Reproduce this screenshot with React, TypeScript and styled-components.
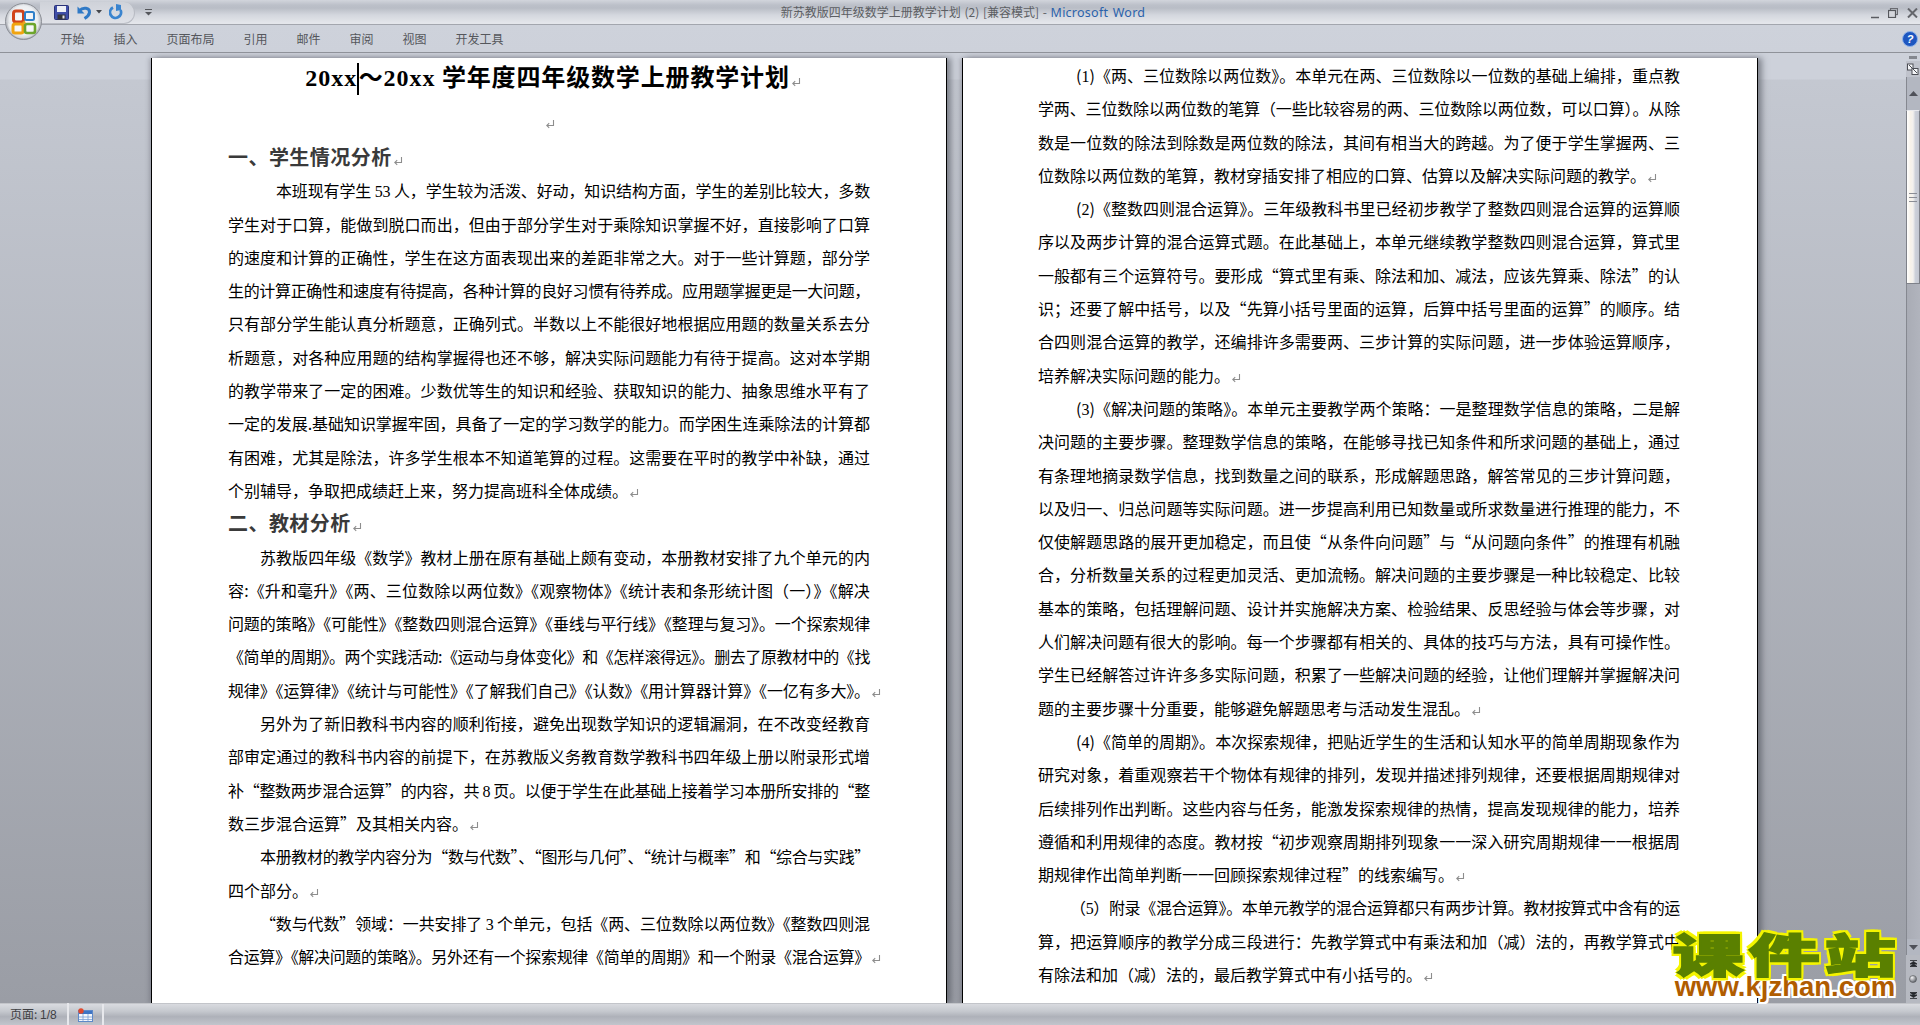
import React, { useLayoutEffect, useRef } from "react";
import styled, { createGlobalStyle } from "styled-components";

const CJK = `"Noto Sans CJK SC", "Noto Sans", sans-serif`;
const TEXT_W = 642;
const PITCH = 33.3;

const Global = createGlobalStyle`
  html, body { margin: 0; padding: 0; height: 100%; overflow: hidden; background: #c8ccd4; }
  #root { height: 100%; }
`;

const Shell = styled.div`
  position: relative;
  width: 1920px;
  height: 1025px;
  display: flex;
  flex-direction: column;
  overflow: hidden;
  font-family: ${CJK};
`;

/* ---------- title bar ---------- */
const TitleBar = styled.div`
  height: 24px;
  flex: none;
  display: grid;
  grid-template-columns: 1fr auto 1fr;
  align-items: center;
  background: linear-gradient(#d2d5dc 0, #bcc0c9 5px, #b9bdc6 8px, #d4d7de 15px, #e4e6eb 23px);
  border-bottom: 1px solid #a3a6ae;
`;
const Qat = styled.div`
  justify-self: start;
  margin-left: 40px;
  width: 95px;
  height: 22px;
  display: flex;
  align-items: center;
  padding-left: 14px;
  box-sizing: border-box;
  border: 1px solid #b9bcc4;
  border-left: none;
  border-top: none;
  border-radius: 0 12px 12px 0;
  background: linear-gradient(#cfd2d9, #dfe1e7);
`;
const QatSlot = styled.span<{ $w: number }>`
  display: flex;
  align-items: center;
  width: ${(p) => p.$w}px;
  flex: none;
`;
const WindowTitle = styled.div`
  font-size: 12px;
  color: #5c5e63;
  white-space: pre;
  word-spacing: 1px;
  line-height: 24px;
  padding-left: 6px;
`;
const AppName = styled.span`
  color: #2b62ab;
  font-family: "Noto Sans", sans-serif;
  font-size: 12.5px;
  letter-spacing: 0.25px;
`;
const TitleDropdown = styled.span`
  display: flex;
  margin-left: 22px;
`;
const WindowButtons = styled.div`
  justify-self: end;
  display: flex;
  align-items: center;
  gap: 9px;
  margin-right: 2px;
`;

/* ---------- ribbon tabs ---------- */
const Ribbon = styled.div`
  height: 27px;
  flex: none;
  display: flex;
  align-items: center;
  padding-left: 46px;
  background: linear-gradient(#ced2db, #cdd1da);
  border-bottom: 1px solid #8f9299;
`;
const Tab = styled.div`
  padding: 0 14.5px;
  font-size: 12px;
  line-height: 26px;
  color: #55575c;
`;
const HelpSlot = styled.div`
  display: flex;
  margin-left: auto;
  margin-right: 2px;
`;

const Orb = styled.div`
  position: absolute;
  left: 5px;
  top: 3px;
  width: 37px;
  height: 37px;
`;

/* ---------- document area ---------- */
const DocArea = styled.div`
  flex: 1;
  min-height: 0;
  display: flex;
`;
const Workspace = styled.div`
  flex: 1;
  min-width: 0;
  padding: 5px 0 0 151px;
  display: flex;
  gap: 15px;
  overflow: hidden;
  background: linear-gradient(#cdd1da 0, #cdd1da 26px, #c4c8d1 27px, #9a9da5 100%);
`;
const Page = styled.div`
  width: 796px;
  flex: none;
  box-sizing: border-box;
  padding: 1px 0 0 75px;
  background: #fff;
  border-left: 1px solid #000;
  border-right: 1px solid #000;
  box-shadow: 4px 0 6px rgba(70, 72, 82, 0.55), -2px 0 4px rgba(70, 72, 82, 0.25);
  overflow: hidden;
  color: #000;
`;
const FirstPage = styled(Page)`
  padding: 0 0 0 76px;
`;
const DocTitle = styled.div`
  width: ${TEXT_W}px;
  box-sizing: border-box;
  padding-left: 8px;
  height: 38px;
  line-height: 35px;
  text-align: center;
  font-size: 24px;
  font-weight: 700;
  white-space: pre;
  letter-spacing: 0.85px;
`;
const LatinBold = styled.span`
  font-family: "Liberation Serif", serif;
  letter-spacing: 1px;
`;
const Caret = styled.span`
  display: inline-block;
  width: 1.5px;
  height: 32px;
  background: #000;
  vertical-align: middle;
`;
const EmptyPara = styled.div`
  width: ${TEXT_W}px;
  height: 45px;
  line-height: 50px;
  text-align: center;
`;
const Heading = styled.div`
  height: ${PITCH}px;
  line-height: 31px;
  font-size: 20px;
  font-weight: 700;
  color: #3a3a3a;
  letter-spacing: 0.45px;
  white-space: pre;
`;
const Line = styled.div<{ $indent: number }>`
  height: ${PITCH}px;
  line-height: ${PITCH}px;
  font-size: 16px;
  white-space: pre;
  padding-left: ${(p) => p.$indent}px;
`;
const Num = styled.span`
  font-family: "Liberation Serif", serif;
`;
const ParaMark = styled.svg`
  width: 10px;
  height: 10px;
  margin-left: 1px;
  vertical-align: -1px;
`;

/* ---------- scrollbar ---------- */
const Scrollbar = styled.div`
  width: 14px;
  flex: none;
  display: flex;
  flex-direction: column;
  background: linear-gradient(#cdd1da, #9fa3ab);
`;
const SplitBox = styled.div`
  height: 8px;
  flex: none;
  display: flex;
  align-items: center;
  justify-content: center;
`;
const SplitDash = styled.div`
  width: 8px;
  height: 3px;
  background: #84878e;
`;
const RulerBtn = styled.div`
  height: 16px;
  flex: none;
  display: flex;
  align-items: center;
  justify-content: center;
  background: #c0c3cc;
`;
const ArrowBtn = styled.div<{ $h: number }>`
  height: ${(p) => p.$h}px;
  flex: none;
  display: flex;
  align-items: center;
  justify-content: center;
  border-left: 1px solid #858890;
  background: #b3b7c1;
`;
const Thumb = styled.div`
  height: 174px;
  flex: none;
  display: flex;
  align-items: center;
  justify-content: center;
  box-sizing: border-box;
  border: 1px solid #7e8189;
  border-top-color: #e9eaee;
  background: linear-gradient(90deg, #fff 0, #f7f2e9 30%, #f3f1ee 50%, #ccd0d9 70%, #c4c8d2 100%);
`;
const Grip = styled.div`
  width: 8px;
  height: 7px;
  border-top: 1px solid #8a8d95;
  border-bottom: 1px solid #8a8d95;
  background: linear-gradient(transparent 3px, #8a8d95 3px, #8a8d95 4px, transparent 4px);
`;
const Track = styled.div`
  flex: 1;
  border-left: 1px solid #858890;
  background: linear-gradient(90deg, #a9acb5, #b1b4bd);
`;
const BrowseBtn = styled.div`
  height: 16px;
  flex: none;
  display: flex;
  align-items: center;
  justify-content: center;
  background: #b6b9c1;
`;

/* ---------- status bar ---------- */
const StatusBar = styled.div`
  height: 22px;
  flex: none;
  display: flex;
  align-items: center;
  border-top: 1px solid #c3c5ca;
  box-sizing: border-box;
  background: linear-gradient(#d9dbe0 0, #c5c8ce 35%, #aeb1b9 60%, #c2c5cc 100%);
`;
const StatusText = styled.div`
  width: 69px;
  box-sizing: border-box;
  padding-left: 10px;
  font-size: 12px;
  color: #3f4044;
  border-right: 2px solid #e7e8ec;
  line-height: 21px;
  white-space: pre;
`;
const StatusNum = styled.span`
  font-family: "Liberation Sans", sans-serif;
`;
const StatusIcon = styled.div`
  width: 33px;
  display: flex;
  justify-content: center;
  border-right: 2px solid #e7e8ec;
  height: 21px;
  align-items: center;
`;

/* ---------- site watermark ---------- */
const Watermark = styled.div`
  position: absolute;
  left: 1667px;
  top: 927px;
  width: 236px;
  display: flex;
  flex-direction: column;
  align-items: center;
`;
const WmTitle = styled.div`
  font-size: 46px;
  line-height: 50px;
  font-weight: 900;
  color: #5a8000;
  letter-spacing: 3px;
  margin-right: -3px;
  white-space: nowrap;
  transform: scaleX(1.55);
  -webkit-text-stroke: 1.5px #5a8000;
  text-shadow: 2px 0 #f4f400, -2px 0 #f4f400, 0 3px #f4f400, 0 -3px #f4f400, 2px 3px #f4f400, -2px 3px #f4f400,
    2px -3px #f4f400, -2px -3px #f4f400;
`;
const WmUrl = styled.div`
  font-family: "Liberation Sans", sans-serif;
  font-size: 27.5px;
  line-height: 28px;
  font-weight: 700;
  color: #b05c00;
  white-space: nowrap;
  margin-top: -4px;
  text-shadow: 2px 0 #fff, -2px 0 #fff, 0 2px #fff, 0 -2px #fff, 2px 2px #fff, -2px 2px #fff, 2px -2px #fff,
    -2px -2px #fff;
`;

/* ---------- content ---------- */
type LineData = { t: string; i?: number; end?: boolean; fit?: boolean };

const page1Top: LineData[] = [
  { t: "本班现有学生 53 人，学生较为活泼、好动，知识结构方面，学生的差别比较大，多数", i: 48, fit: true },
  { t: "学生对于口算，能做到脱口而出，但由于部分学生对于乘除知识掌握不好，直接影响了口算", fit: true },
  { t: "的速度和计算的正确性，学生在这方面表现出来的差距非常之大。对于一些计算题，部分学", fit: true },
  { t: "生的计算正确性和速度有待提高，各种计算的良好习惯有待养成。应用题掌握更是一大问题，", fit: true },
  { t: "只有部分学生能认真分析题意，正确列式。半数以上不能很好地根据应用题的数量关系去分", fit: true },
  { t: "析题意，对各种应用题的结构掌握得也还不够，解决实际问题能力有待于提高。这对本学期", fit: true },
  { t: "的教学带来了一定的困难。少数优等生的知识和经验、获取知识的能力、抽象思维水平有了", fit: true },
  { t: "一定的发展.基础知识掌握牢固，具备了一定的学习数学的能力。而学困生连乘除法的计算都", fit: true },
  { t: "有困难，尤其是除法，许多学生根本不知道笔算的过程。这需要在平时的教学中补缺，通过", fit: true },
  { t: "个别辅导，争取把成绩赶上来，努力提高班科全体成绩。", end: true },
];
const page1Bottom: LineData[] = [
  { t: "苏教版四年级《数学》教材上册在原有基础上颇有变动，本册教材安排了九个单元的内", i: 32, fit: true },
  { t: "容:《升和毫升》《两、三位数除以两位数》《观察物体》《统计表和条形统计图（一）》《解决", fit: true },
  { t: "问题的策略》《可能性》《整数四则混合运算》《垂线与平行线》《整理与复习》。一个探索规律", fit: true },
  { t: "《简单的周期》。两个实践活动:《运动与身体变化》和《怎样滚得远》。删去了原教材中的《找", fit: true },
  { t: "规律》《运算律》《统计与可能性》《了解我们自己》《认数》《用计算器计算》《一亿有多大》。", fit: true, end: true },
  { t: "另外为了新旧教科书内容的顺利衔接，避免出现数学知识的逻辑漏洞，在不改变经教育", i: 32, fit: true },
  { t: "部审定通过的教科书内容的前提下，在苏教版义务教育数学教科书四年级上册以附录形式增", fit: true },
  { t: "补“整数两步混合运算”的内容，共 8 页。以便于学生在此基础上接着学习本册所安排的“整", fit: true },
  { t: "数三步混合运算”及其相关内容。", end: true },
  { t: "本册教材的教学内容分为“数与代数”、“图形与几何”、“统计与概率”和“综合与实践”", i: 32, fit: true },
  { t: "四个部分。", end: true },
  { t: "“数与代数”领域：一共安排了 3 个单元，包括《两、三位数除以两位数》《整数四则混", i: 32, fit: true },
  { t: "合运算》《解决问题的策略》。另外还有一个探索规律《简单的周期》和一个附录《混合运算》", fit: true, end: true },
];
const page2: LineData[] = [
  { t: "(1)《两、三位数除以两位数》。本单元在两、三位数除以一位数的基础上编排，重点教", i: 38, fit: true },
  { t: "学两、三位数除以两位数的笔算（一些比较容易的两、三位数除以两位数，可以口算）。从除", fit: true },
  { t: "数是一位数的除法到除数是两位数的除法，其间有相当大的跨越。为了便于学生掌握两、三", fit: true },
  { t: "位数除以两位数的笔算，教材穿插安排了相应的口算、估算以及解决实际问题的教学。", end: true },
  { t: "(2)《整数四则混合运算》。三年级教科书里已经初步教学了整数四则混合运算的运算顺", i: 38, fit: true },
  { t: "序以及两步计算的混合运算式题。在此基础上，本单元继续教学整数四则混合运算，算式里", fit: true },
  { t: "一般都有三个运算符号。要形成“算式里有乘、除法和加、减法，应该先算乘、除法”的认", fit: true },
  { t: "识；还要了解中括号，以及“先算小括号里面的运算，后算中括号里面的运算”的顺序。结", fit: true },
  { t: "合四则混合运算的教学，还编排许多需要两、三步计算的实际问题，进一步体验运算顺序，", fit: true },
  { t: "培养解决实际问题的能力。", end: true },
  { t: "(3)《解决问题的策略》。本单元主要教学两个策略：一是整理数学信息的策略，二是解", i: 38, fit: true },
  { t: "决问题的主要步骤。整理数学信息的策略，在能够寻找已知条件和所求问题的基础上，通过", fit: true },
  { t: "有条理地摘录数学信息，找到数量之间的联系，形成解题思路，解答常见的三步计算问题，", fit: true },
  { t: "以及归一、归总问题等实际问题。进一步提高利用已知数量或所求数量进行推理的能力，不", fit: true },
  { t: "仅使解题思路的展开更加稳定，而且使“从条件向问题”与“从问题向条件”的推理有机融", fit: true },
  { t: "合，分析数量关系的过程更加灵活、更加流畅。解决问题的主要步骤是一种比较稳定、比较", fit: true },
  { t: "基本的策略，包括理解问题、设计并实施解决方案、检验结果、反思经验与体会等步骤，对", fit: true },
  { t: "人们解决问题有很大的影响。每一个步骤都有相关的、具体的技巧与方法，具有可操作性。", fit: true },
  { t: "学生已经解答过许许多多实际问题，积累了一些解决问题的经验，让他们理解并掌握解决问", fit: true },
  { t: "题的主要步骤十分重要，能够避免解题思考与活动发生混乱。", end: true },
  { t: "(4)《简单的周期》。本次探索规律，把贴近学生的生活和认知水平的简单周期现象作为", i: 38, fit: true },
  { t: "研究对象，着重观察若干个物体有规律的排列，发现并描述排列规律，还要根据周期规律对", fit: true },
  { t: "后续排列作出判断。这些内容与任务，能激发探索规律的热情，提高发现规律的能力，培养", fit: true },
  { t: "遵循和利用规律的态度。教材按“初步观察周期排列现象一一深入研究周期规律一一根据周", fit: true },
  { t: "期规律作出简单判断一一回顾探索规律过程”的线索编写。", end: true },
  { t: "（5）附录《混合运算》。本单元教学的混合运算都只有两步计算。教材按算式中含有的运", i: 32, fit: true },
  { t: "算，把运算顺序的教学分成三段进行：先教学算式中有乘法和加（减）法的，再教学算式中", fit: true },
  { t: "有除法和加（减）法的，最后教学算式中有小括号的。", end: true },
];

const tabs = ["开始", "插入", "页面布局", "引用", "邮件", "审阅", "视图", "开发工具"];

/* ---------- small drawings ---------- */
const Mark = () => (
  <ParaMark viewBox="0 0 10 10">
    <path d="M8.5 1v5.5H2M4.2 4.2 1.8 6.5l2.4 2.3" fill="none" stroke="#8d8d8d" strokeWidth="1.1" />
  </ParaMark>
);

const OfficeLogo = () => (
  <svg width="37" height="37" viewBox="0 0 37 37">
    <defs>
      <radialGradient id="orbFill" cx="50%" cy="45%" r="55%">
        <stop offset="0" stopColor="#ffffff" />
        <stop offset="0.7" stopColor="#eceef1" />
        <stop offset="1" stopColor="#9ea2aa" />
      </radialGradient>
    </defs>
    <circle cx="18.5" cy="18.5" r="18" fill="url(#orbFill)" stroke="#8d9097" />
    <path d="M3 20a15.500 15.500 0 0 0 31 0c-6 5-25 5-31 0z" fill="#fff" opacity=".45" />
    <rect x="8.500" y="8" width="10" height="11" rx="2.500" fill="none" stroke="#d1431a" strokeWidth="3" />
    <rect x="20" y="9" width="9" height="8" rx="1.500" fill="none" stroke="#2f7fc9" strokeWidth="2" />
    <rect x="8" y="21" width="10" height="9" rx="2" fill="none" stroke="#f0a410" strokeWidth="3" />
    <rect x="20" y="21" width="10" height="9" rx="2" fill="none" stroke="#6da52c" strokeWidth="2.600" />
    <circle cx="19" cy="19.500" r="1.600" fill="#e8a020" />
  </svg>
);
const SaveIcon = () => (
  <svg width="15" height="15" viewBox="0 0 15 15">
    <rect x="0.500" y="0.500" width="14" height="14" rx="1" fill="#3f4ea8" stroke="#2a3278" />
    <rect x="3" y="1" width="9" height="6" fill="#eef0f6" />
    <rect x="3.500" y="9.500" width="8" height="5" fill="#33353c" />
    <rect x="8.500" y="10.500" width="2" height="3" fill="#e4e4e8" />
  </svg>
);
const UndoIcon = () => (
  <svg width="15" height="15" viewBox="0 0 15 15">
    <path d="M2.500 5.500C6 1.800 13 2.500 12.500 7.500 12.200 10 10 12 7.500 13.500" fill="none" stroke="#2f79c6" strokeWidth="3" />
    <path d="M0.500 1.500v7h7z" fill="#2f79c6" />
  </svg>
);
const CaretDown = () => (
  <svg width="6" height="4" viewBox="0 0 6 4">
    <path d="M0 0h6L3 3.500z" fill="#44464c" />
  </svg>
);
const RedoIcon = () => (
  <svg width="14" height="16" viewBox="0 0 14 16">
    <path d="M4 3.500A5.500 5.500 0 1 0 11.500 6" fill="none" stroke="#3a84cf" strokeWidth="2.800" />
    <path d="M7 0v7l5-1V1z" fill="#3a84cf" />
  </svg>
);
const CustomizeIcon = () => (
  <svg width="7" height="7" viewBox="0 0 7 7">
    <path d="M0 0.500h7" stroke="#55575c" />
    <path d="M0 3h7L3.500 6.500z" fill="#55575c" />
  </svg>
);
const MinIcon = () => (
  <svg width="8" height="14" viewBox="0 0 8 14">
    <path d="M0 11.500h8" stroke="#5a5c62" strokeWidth="1.500" />
  </svg>
);
const RestoreIcon = () => (
  <svg width="10" height="10" viewBox="0 0 10 10">
    <rect x="2.500" y="0.500" width="7" height="6" fill="none" stroke="#6a6c72" strokeWidth="1.200" />
    <rect x="0.500" y="2.500" width="7" height="7" fill="#d4d6dc" stroke="#55575c" strokeWidth="1.200" />
  </svg>
);
const CloseIcon = () => (
  <svg width="11" height="10" viewBox="0 0 11 10">
    <path d="M1 0.500 10 9.500M10 0.500 1 9.500" stroke="#64666c" strokeWidth="2" />
  </svg>
);
const HelpIcon = () => (
  <svg width="16" height="16" viewBox="0 0 16 16">
    <circle cx="8" cy="8" r="7.500" fill="#1e56c0" stroke="#8fb2e8" />
    <text x="8" y="12" textAnchor="middle" fontFamily="Liberation Sans, sans-serif" fontWeight="700" fontStyle="italic" fontSize="11" fill="#fff">?</text>
  </svg>
);
const RulerIcon = () => (
  <svg width="12" height="12" viewBox="0 0 12 12">
    <rect x="0.500" y="1" width="5.500" height="6" fill="#f4f5f8" stroke="#4c4e55" />
    <rect x="5" y="5.500" width="6" height="6" fill="#f4f5f8" stroke="#4c4e55" />
    <path d="M2 2l8 8" stroke="#4c4e55" />
  </svg>
);
const Triangle = ({ up }: { up: boolean }) => (
  <svg width="9" height="5" viewBox="0 0 9 5">
    <path d={up ? "M0 5 4.500 0 9 5z" : "M0 0h9L4.500 5z"} fill="#4f5159" />
  </svg>
);
const DoubleArrow = ({ up }: { up: boolean }) => (
  <svg width="7" height="7" viewBox="0 0 7 7">
    <path d={up ? "M0 0.500h7M3.500 1.500 0 4h7zM3.500 4 0 6.500h7z" : "M0 6.500h7M3.500 5.500 0 3h7zM3.500 3 0 0.500h7z"} stroke="#26282d" strokeWidth="0.800" fill="#26282d" />
  </svg>
);
const BrowseDot = () => (
  <svg width="8" height="8" viewBox="0 0 8 8">
    <defs>
      <radialGradient id="dot" cx="35%" cy="30%" r="75%">
        <stop offset="0" stopColor="#f4f5f7" />
        <stop offset="1" stopColor="#5b5e65" />
      </radialGradient>
    </defs>
    <circle cx="4" cy="4" r="3.500" fill="url(#dot)" stroke="#55575c" strokeWidth="0.600" />
  </svg>
);
const MacroIcon = () => (
  <svg width="15" height="14" viewBox="0 0 15 14">
    <rect x="0.500" y="2.500" width="14" height="11" fill="#f4f7fc" stroke="#5e89c8" />
    <rect x="1" y="3" width="13" height="3" fill="#3e74c4" />
    <path d="M1 9h13M1 11.500h13M5 6v7M10 6v7" stroke="#7b9fd3" strokeWidth="0.800" />
    <circle cx="3" cy="3" r="2.700" fill="#e0492e" />
  </svg>
);

/* ---------- text ---------- */
const withNumbers = (text: string) =>
  text.split(/(\d+)/).map((part, k) => (k % 2 ? <Num key={k}>{part}</Num> : part));

const TextLine = ({ t, i = 0, end, fit }: LineData) => {
  const ref = useRef<HTMLSpanElement>(null);
  useLayoutEffect(() => {
    const el = ref.current;
    if (!el || !fit) return;
    el.style.letterSpacing = "0px";
    const natural = el.getBoundingClientRect().width;
    el.style.letterSpacing = `${(TEXT_W - i - natural) / t.length}px`;
  }, [t, i, fit]);
  return (
    <Line $indent={i}>
      <span ref={ref}>{withNumbers(t)}</span>
      {end && <Mark />}
    </Line>
  );
};

export default function App() {
  return (
    <Shell lang="zh-CN">
      <Global />
      <TitleBar>
        <Qat>
          <QatSlot $w={23}><SaveIcon /></QatSlot>
          <QatSlot $w={19}><UndoIcon /></QatSlot>
          <QatSlot $w={13}><CaretDown /></QatSlot>
          <QatSlot $w={14}><RedoIcon /></QatSlot>
          <TitleDropdown><CustomizeIcon /></TitleDropdown>
        </Qat>
        <WindowTitle>
          新苏教版四年级数学上册教学计划 (2) [兼容模式] - <AppName>Microsoft Word</AppName>
        </WindowTitle>
        <WindowButtons>
          <MinIcon />
          <RestoreIcon />
          <CloseIcon />
        </WindowButtons>
      </TitleBar>
      <Ribbon>
        {tabs.map((t) => (
          <Tab key={t}>{t}</Tab>
        ))}
        <HelpSlot>
          <HelpIcon />
        </HelpSlot>
      </Ribbon>
      <DocArea>
        <Workspace>
          <FirstPage>
            <DocTitle>
              <LatinBold>20xx</LatinBold>
              <Caret />～<LatinBold>20xx</LatinBold> 学年度四年级数学上册教学计划
              <Mark />
            </DocTitle>
            <EmptyPara>
              <Mark />
            </EmptyPara>
            <Heading>
              一、学生情况分析
              <Mark />
            </Heading>
            {page1Top.map((l) => (
              <TextLine key={l.t} {...l} />
            ))}
            <Heading>
              二、教材分析
              <Mark />
            </Heading>
            {page1Bottom.map((l) => (
              <TextLine key={l.t} {...l} />
            ))}
          </FirstPage>
          <Page>
            {page2.map((l) => (
              <TextLine key={l.t} {...l} />
            ))}
          </Page>
        </Workspace>
        <Scrollbar>
          <SplitBox><SplitDash /></SplitBox>
          <RulerBtn><RulerIcon /></RulerBtn>
          <ArrowBtn $h={33}><Triangle up /></ArrowBtn>
          <Thumb><Grip /></Thumb>
          <Track />
          <ArrowBtn $h={16}><Triangle up={false} /></ArrowBtn>
          <BrowseBtn><DoubleArrow up /></BrowseBtn>
          <BrowseBtn><BrowseDot /></BrowseBtn>
          <BrowseBtn><DoubleArrow up={false} /></BrowseBtn>
        </Scrollbar>
      </DocArea>
      <StatusBar>
        <StatusText>
          页面: <StatusNum>1/8</StatusNum>
        </StatusText>
        <StatusIcon>
          <MacroIcon />
        </StatusIcon>
      </StatusBar>
      <Orb>
        <OfficeLogo />
      </Orb>
      <Watermark>
        <WmTitle>课件站</WmTitle>
        <WmUrl>www.kjzhan.com</WmUrl>
      </Watermark>
    </Shell>
  );
}
